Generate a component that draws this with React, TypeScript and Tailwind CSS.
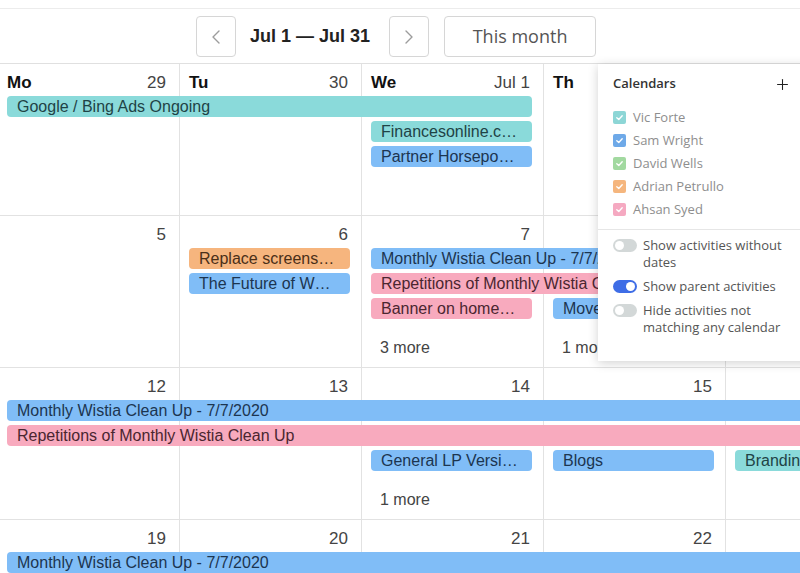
import { Plus, ChevronLeft, ChevronRight } from "lucide-react";

type Tone = "teal" | "blue" | "pink" | "orange";

interface CalEvent {
  col: number;
  span: number;
  row: number;
  label: string;
  tone: Tone;
}

interface Week {
  labels?: string[];
  dates: string[];
  events: CalEvent[];
  more: { col: number; text: string }[];
}

const colStart = ["col-start-1", "col-start-2", "col-start-3", "col-start-4", "col-start-5", "col-start-6", "col-start-7"];
const colSpan = ["col-span-1", "col-span-2", "col-span-3", "col-span-4", "col-span-5", "col-span-6", "col-span-7"];
const rowStart = ["row-start-1", "row-start-2", "row-start-3", "row-start-4", "row-start-5"];

const toneClass: Record<Tone, string> = {
  teal: "bg-[#8adada] text-[#1f4346]",
  blue: "bg-[#80bdf7] text-[#1c3550]",
  pink: "bg-[#f8aabe] text-[#4a2630]",
  orange: "bg-[#f6b57e] text-[#4a2f18]",
};

const weeks: Week[] = [
  {
    labels: ["Mo", "Tu", "We", "Th", "Fr", "Sa", "Su"],
    dates: ["29", "30", "Jul 1", "2", "3", "4", "5"],
    events: [
      { col: 1, span: 3, row: 2, label: "Google / Bing Ads Ongoing", tone: "teal" },
      { col: 3, span: 1, row: 3, label: "Financesonline.c…", tone: "teal" },
      { col: 3, span: 1, row: 4, label: "Partner Horsepo…", tone: "blue" },
    ],
    more: [],
  },
  {
    dates: ["5", "6", "7", "8", "9", "10", "11"],
    events: [
      { col: 2, span: 1, row: 2, label: "Replace screens…", tone: "orange" },
      { col: 2, span: 1, row: 3, label: "The Future of W…", tone: "blue" },
      { col: 3, span: 5, row: 2, label: "Monthly Wistia Clean Up - 7/7/2020", tone: "blue" },
      { col: 3, span: 5, row: 3, label: "Repetitions of Monthly Wistia Clean Up", tone: "pink" },
      { col: 3, span: 1, row: 4, label: "Banner on home…", tone: "pink" },
      { col: 4, span: 1, row: 4, label: "Move to new site", tone: "blue" },
    ],
    more: [
      { col: 3, text: "3 more" },
      { col: 4, text: "1 more" },
    ],
  },
  {
    dates: ["12", "13", "14", "15", "16", "17", "18"],
    events: [
      { col: 1, span: 7, row: 2, label: "Monthly Wistia Clean Up - 7/7/2020", tone: "blue" },
      { col: 1, span: 7, row: 3, label: "Repetitions of Monthly Wistia Clean Up", tone: "pink" },
      { col: 3, span: 1, row: 4, label: "General LP Versi…", tone: "blue" },
      { col: 4, span: 1, row: 4, label: "Blogs", tone: "blue" },
      { col: 5, span: 1, row: 4, label: "Branding", tone: "teal" },
    ],
    more: [{ col: 3, text: "1 more" }],
  },
  {
    dates: ["19", "20", "21", "22", "23", "24", "25"],
    events: [{ col: 1, span: 7, row: 2, label: "Monthly Wistia Clean Up - 7/7/2020", tone: "blue" }],
    more: [],
  },
];

const calendars = [
  { name: "Vic Forte", color: "bg-[#8dd6d6]" },
  { name: "Sam Wright", color: "bg-[#6ea9e8]" },
  { name: "David Wells", color: "bg-[#a2d9a0]" },
  { name: "Adrian Petrullo", color: "bg-[#f5b67e]" },
  { name: "Ahsan Syed", color: "bg-[#f5a9c1]" },
];

function Toggle({ on }: { on: boolean }) {
  return (
    <div
      className={`mt-[2px] flex h-[13px] w-[24px] shrink-0 items-center rounded-full px-[2px] ${
        on ? "justify-end bg-[#3e6de6]" : "justify-start bg-[#d3d8d8]"
      }`}
    >
      <div className="h-[9px] w-[9px] rounded-full bg-white" />
    </div>
  );
}

export default function App() {
  return (
    <div className="relative h-[573px] w-[800px] overflow-hidden bg-white font-['Liberation_Sans',Arial,sans-serif]">
      <div className="h-[9px] border-b border-[#ececec]" />
      {/* Toolbar */}
      <div className="flex h-[55px] items-start border-b border-[#e0e0e0] pl-[196px] pt-[7px]">
        <button className="flex h-[41px] w-[40px] items-center justify-center rounded-[4px] border border-[#d6d6d6] text-[#9c9c9c]">
          <ChevronLeft size={24} strokeWidth={1.4} />
        </button>
        <div className="ml-[14px] flex h-[41px] items-center text-[18px] font-bold text-[#222]">Jul 1 — Jul 31</div>
        <button className="ml-[19px] flex h-[41px] w-[40px] items-center justify-center rounded-[4px] border border-[#d6d6d6] text-[#9c9c9c]">
          <ChevronRight size={24} strokeWidth={1.4} />
        </button>
        <button className="ml-[15px] h-[41px] w-[152px] rounded-[4px] border border-[#d6d6d6] font-['Open_Sans',sans-serif] text-[18px] text-[#555]">
          This month
        </button>
      </div>

      {/* Month grid */}
      <div className="ml-[-2px]">
        {weeks.map((week, wi) => (
          <div
            key={wi}
            className="grid h-[152px] w-[1274px] grid-cols-[repeat(7,182px)] grid-rows-[32px_25px_25px_25px_1fr] border-b border-[#e2e2e2]"
          >
            {week.dates.map((_, ci) => (
              <div key={`bg${ci}`} className={`${colStart[ci]} row-span-5 row-start-1 border-r border-[#e2e2e2]`} />
            ))}
            {week.dates.map((d, ci) => (
              <div
                key={`d${ci}`}
                className={`${colStart[ci]} row-start-1 flex items-start justify-between pl-[9px] pr-[14px] pt-[9px] text-[17px] leading-[20px]`}
              >
                <span className="font-bold text-[#111]">{week.labels ? week.labels[ci] : ""}</span>
                <span className="text-[#444]">{d}</span>
              </div>
            ))}
            {week.events.map((ev, ei) => (
              <div
                key={`e${ei}`}
                className={`${colStart[ev.col - 1]} ${colSpan[ev.span - 1]} ${rowStart[ev.row - 1]} ml-[9px] mr-[12px] h-[21px] overflow-hidden whitespace-nowrap rounded-[4px] px-[10px] text-[16px] leading-[21px] ${toneClass[ev.tone]}`}
              >
                {ev.label}
              </div>
            ))}
            {week.more.map((m, mi) => (
              <div
                key={`m${mi}`}
                className={`${colStart[m.col - 1]} row-start-5 pl-[18px] pt-[15px] text-[16px] leading-[20px] text-[#444]`}
              >
                {m.text}
              </div>
            ))}
          </div>
        ))}
      </div>

      {/* Calendars popover */}
      <div className="absolute left-[598px] top-[64px] h-[297px] w-[215px] bg-white font-['Open_Sans',sans-serif] shadow-[0_2px_10px_rgba(0,0,0,0.18)]">
        <div className="flex h-[40px] items-center justify-between pl-[15px] pr-[22px]">
          <span className="text-[13px] font-semibold text-[#333]">Calendars</span>
          <Plus size={17} strokeWidth={1.5} className="text-[#222]" />
        </div>
        <div className="pb-[8px] pl-[15px] pt-[2px]">
          {calendars.map((c) => (
            <div key={c.name} className="flex h-[23px] items-center gap-[7px]">
              <div className={`flex h-[13px] w-[13px] items-center justify-center rounded-[2px] ${c.color}`}>
                <svg width="9" height="9" viewBox="0 0 10 10" fill="none">
                  <path d="M2 5.2 L4.2 7.2 L8 3" stroke="white" strokeWidth="1.5" strokeLinecap="round" strokeLinejoin="round" />
                </svg>
              </div>
              <span className="text-[13px] text-[#8e8e8e]">{c.name}</span>
            </div>
          ))}
        </div>
        <div className="flex flex-col gap-[7px] border-t border-[#e6e6e6] pl-[15px] pr-[4px] pt-[7px] text-[13px] leading-[17px] text-[#555]">
          <div className="flex items-start gap-[6px]">
            <Toggle on={false} />
            <span>
              Show activities without
              <br />
              dates
            </span>
          </div>
          <div className="flex items-start gap-[6px]">
            <Toggle on={true} />
            <span>Show parent activities</span>
          </div>
          <div className="flex items-start gap-[6px]">
            <Toggle on={false} />
            <span>
              Hide activities not
              <br />
              matching any calendar
            </span>
          </div>
        </div>
      </div>
    </div>
  );
}
